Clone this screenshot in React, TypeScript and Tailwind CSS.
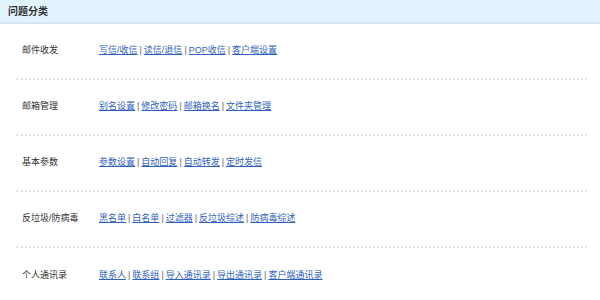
const categories = [
  { label: '邮件收发', links: ['写信/收信', '读信/退信', 'POP收信', '客户端设置'] },
  { label: '邮箱管理', links: ['别名设置', '修改密码', '邮箱换名', '文件夹管理'] },
  { label: '基本参数', links: ['参数设置', '自动回复', '自动转发', '定时发信'] },
  { label: '反垃圾/防病毒', links: ['黑名单', '白名单', '过滤器', '反垃圾综述', '防病毒综述'] },
  { label: '个人通讯录', links: ['联系人', '联系组', '导入通讯录', '导出通讯录', '客户端通讯录'] },
];

export default function App() {
  return (
    <div
      className="w-[600px] h-[300px] overflow-hidden bg-white"
      style={{ fontFamily: '"Liberation Sans", "Noto Sans CJK SC", sans-serif' }}
    >
      {/* Header */}
      <div className="h-[24px] bg-[#e2f3fe] border-b-2 border-[#d2e8f7] flex items-center pl-2">
        <h2 className="text-[10px] font-bold text-[#333]">问题分类</h2>
      </div>

      {/* Category rows */}
      <div className="ml-4 mr-[13px]">
        {categories.map((cat, i) => (
          <div
            key={cat.label}
            className={`h-[56px] flex items-center text-[9px] ${
              i < categories.length - 1 ? 'border-b-2 border-dotted border-[#e4e4e4]' : ''
            }`}
          >
            <span className="w-[83px] pl-[6px] text-[#333]">{cat.label}</span>
            <span className="text-[#666]">
              {cat.links.map((link, j) => (
                <span key={link}>
                  {j > 0 && <span className="px-[2px]">|</span>}
                  <a href="#" className="text-[#2f62bd] underline">
                    {link}
                  </a>
                </span>
              ))}
            </span>
          </div>
        ))}
      </div>
    </div>
  );
}
